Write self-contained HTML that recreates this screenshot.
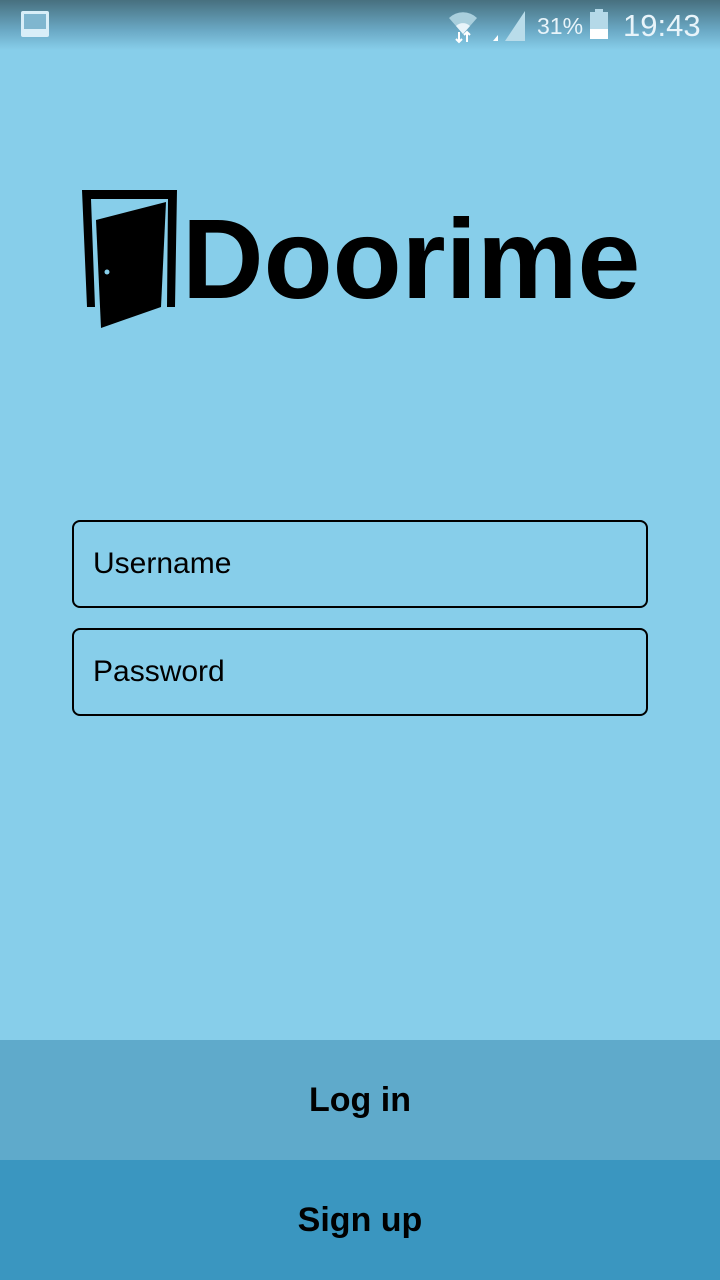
<!DOCTYPE html>
<html><head><style>
body{margin:0;width:720px;height:1280px;background:#87ceea;position:relative;overflow:hidden;font-family:"Liberation Sans",sans-serif}
.sb{position:absolute;top:0;left:0;width:720px;height:50px;background:linear-gradient(#47707f,#6aa8c4 60%,#87ceea)}
.field{position:absolute;left:72px;width:572px;height:84px;border:2px solid #000;border-radius:8px;box-sizing:content-box;font-size:30px;line-height:84px;padding-left:0}
.field span{margin-left:19px}
.btn{position:absolute;left:0;width:720px;height:120px;text-align:center;line-height:120px;font-weight:bold;font-size:34px}
</style></head><body>
<div class="sb">
<svg width="720" height="50" style="position:absolute;left:0;top:0">
<rect x="21" y="11" width="28" height="26" rx="2" fill="#d8eef8"/><rect x="24" y="14" width="22" height="15" fill="#7fb6cf"/>
<path d="M449 18 A20 20 0 0 1 477 18 L463 34Z" fill="#a9cfdd"/>
<path d="M456 26 A10 10 0 0 1 470 26 L463 34Z" fill="#e8f4fa"/>
<path d="M459 32v10M456 39l3 3 3-3M467 42v-10M464 35l3-3 3 3" stroke="#fff" stroke-width="2" fill="none"/>
<path d="M505 41 L525 11 L525 41Z" fill="#b9dcea"/><path d="M493 41 L498 35 L498 41Z" fill="#fff"/>
<rect x="590" y="12" width="18" height="27" fill="#b5d9e8"/><rect x="590" y="29" width="18" height="10" fill="#fff"/><rect x="595" y="9" width="8" height="3" fill="#b5d9e8"/>
<text x="537" y="34" font-size="23" fill="#e8f4fa" font-family="Liberation Sans">31%</text>
<text x="623" y="36" font-size="31" fill="#e8f4fa" font-family="Liberation Sans">19:43</text>
</svg></div>
<svg width="720" height="360" style="position:absolute;left:0;top:0">
<path d="M82 190 H177 L175 307 H167 L168 199 H91 L95 307 H87 Z" fill="#000"/>
<path d="M96 220 L166 202 L161 307 L101 328 Z" fill="#000"/>
<circle cx="107" cy="272" r="2.5" fill="#87ceea"/>
<text x="182" y="298" font-size="113" font-weight="bold" font-family="Liberation Sans" fill="#000">Doorime</text>
</svg>
<div class="field" style="top:520px"><span>Username</span></div>
<div class="field" style="top:628px"><span>Password</span></div>
<div class="btn" style="top:1040px;background:#5faacb">Log in</div>
<div class="btn" style="top:1160px;background:#3a96c0">Sign up</div>
</body></html>
